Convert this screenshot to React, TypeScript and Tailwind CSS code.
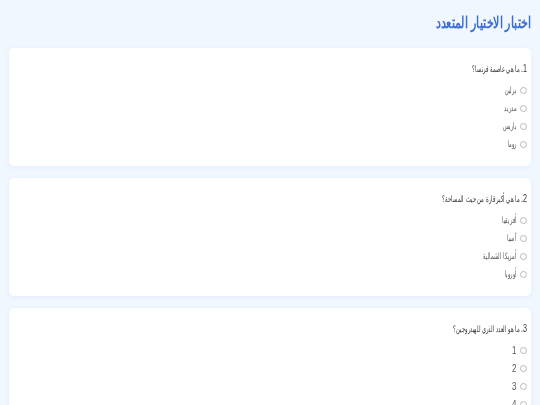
const QUIZ = [
  { q: 'ما هي عاصمة فرنسا؟', options: ['برلين', 'مدريد', 'باريس', 'روما'] },
  { q: 'ما هي أكبر قارة من حيث المساحة؟', options: ['أفريقيا', 'آسيا', 'أمريكا الشمالية', 'أوروبا'] },
  { q: 'ما هو العدد الذري للهيدروجين؟', options: ['1', '2', '3', '4'] },
]

export default function App() {
  return (
    <div dir="rtl" className="h-[405px] overflow-hidden bg-[#f0f7ff] px-[9px] font-['Liberation_Sans',Arial,sans-serif] blur-[0.3px]">
      <div className="h-[48px] pt-[13px]">
        <h1 className="origin-right scale-x-[0.69] text-[16px] leading-[19px] font-bold text-[#3b6fd4]">اختبار الاختيار المتعدد</h1>
      </div>
      <div className="flex flex-col gap-3">
        {QUIZ.map((item, i) => (
          <div key={i} className="h-[118px] shrink-0 rounded-[5px] bg-white px-[4px] pt-[15px] shadow-[0_1px_5px_rgba(60,110,200,0.08)]">
            <p className="flex h-[12px] items-center gap-[1px] text-[8.5px] leading-[12px] text-[#333]">
              <span className="w-[6px] origin-right scale-x-[0.72] text-[10px]">{i + 1}.</span>
              <span className="flex-1 origin-right scale-x-[0.58]">{item.q}</span>
            </p>
            <div className="mt-[6px] flex flex-col">
              {item.options.map((o) => (
                <label key={o} className="flex h-[18px] items-center text-[8.5px] text-[#555]">
                  <span className="ml-[3.5px] h-[7px] w-[7px] rounded-full border-[0.75px] border-[#b8b8b8] bg-white" />
                  {/\d/.test(o) ? (
                    <span className="flex-1 origin-right scale-x-[0.8] text-[10px]">{o}</span>
                  ) : (
                    <span className="flex-1 origin-right scale-x-[0.56]">{o}</span>
                  )}
                </label>
              ))}
            </div>
          </div>
        ))}
      </div>
    </div>
  )
}
